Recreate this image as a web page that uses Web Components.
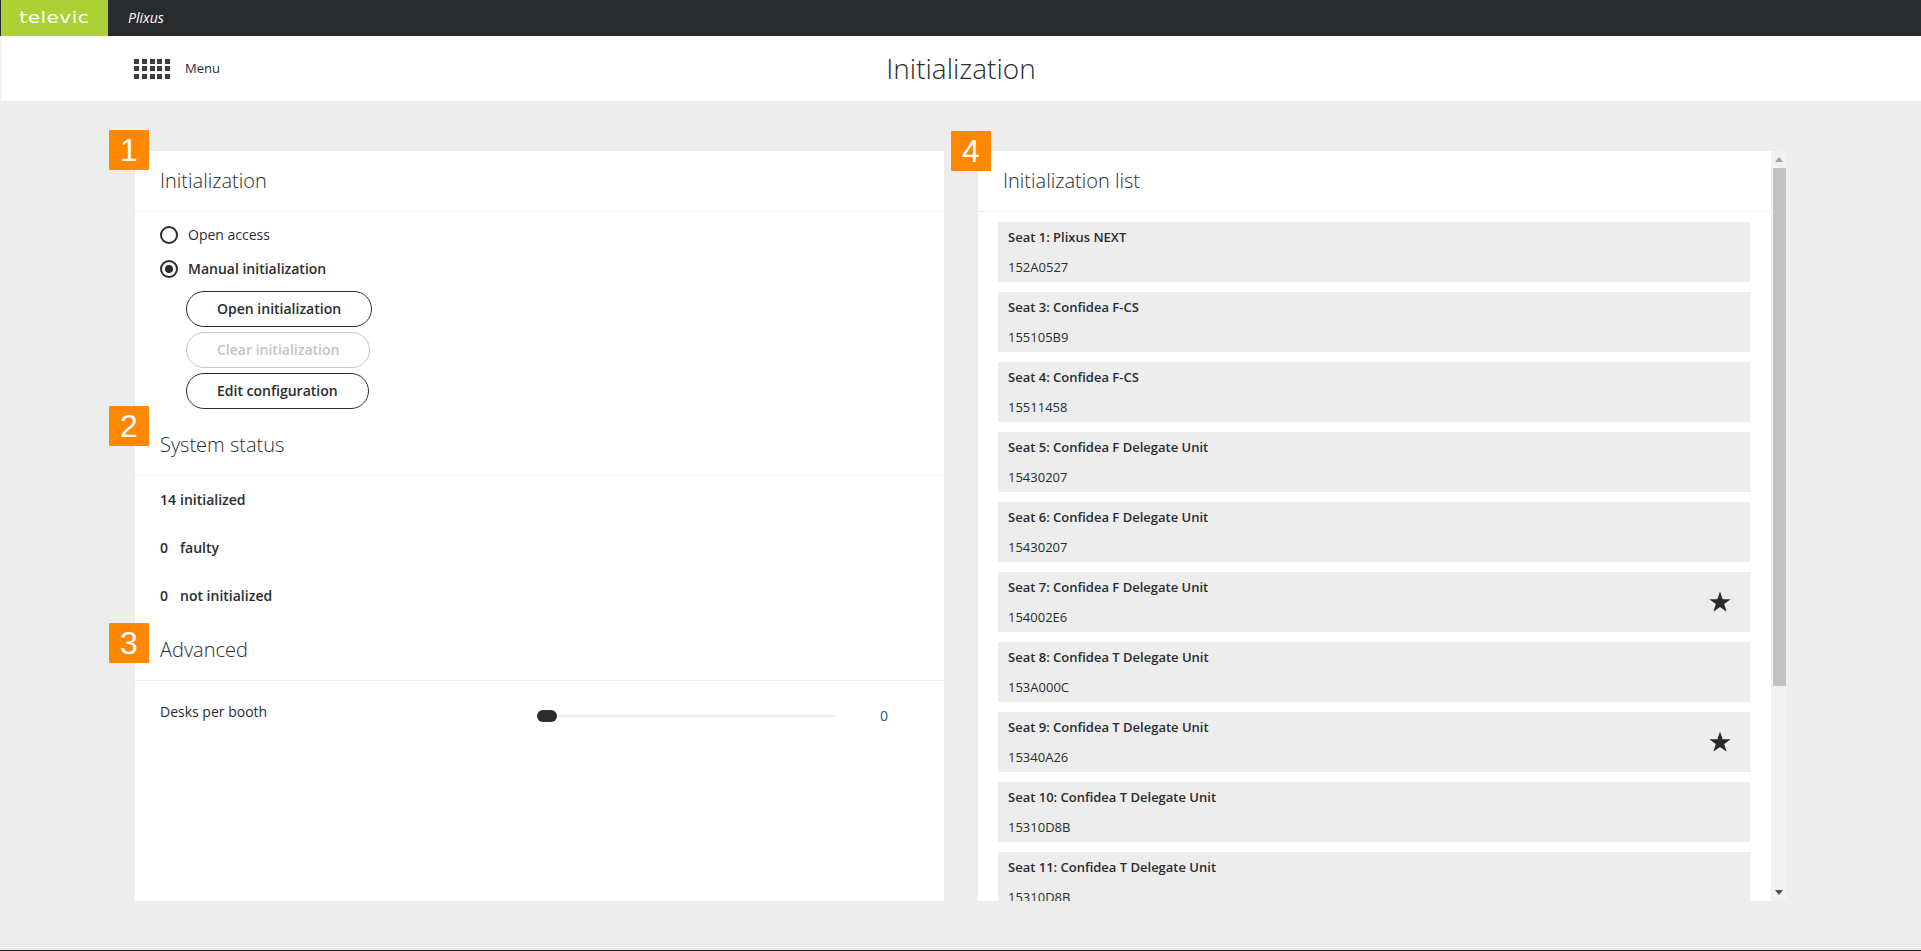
<!DOCTYPE html>
<html lang="en"><head><meta charset="utf-8"><title>Initialization</title>
<style>
html,body{margin:0;height:951px;overflow:hidden;background:#ededed;font-family:"Open Sans",sans-serif;color:#292c2f}
</style></head><body>
<app-shell>
  <top-bar slot="top"></top-bar>
  <page-header slot="head" title-text="Initialization"></page-header>
  <app-panel slot="left">
    <panel-section heading="Initialization" badge="1" badge-top="-21" style="height:264px">
      <radio-row>Open access</radio-row>
      <radio-row checked>Manual initialization</radio-row>
      <div style="display:flex;flex-direction:column;align-items:flex-start;gap:5px;margin:5px 0 0 26px">
        <pill-button>Open initialization</pill-button>
        <pill-button disabled>Clear initialization</pill-button>
        <pill-button>Edit configuration</pill-button>
      </div>
    </panel-section>
    <panel-section heading="System status" badge="2" badge-top="-9" style="height:205px" pad="12">
      <stat-row n="14" gap="tight">initialized</stat-row>
      <stat-row n="0">faulty</stat-row>
      <stat-row n="0">not initialized</stat-row>
    </panel-section>
    <panel-section heading="Advanced" badge="3" badge-top="3">
      <slider-row label="Desks per booth" value="0"></slider-row>
    </panel-section>
  </app-panel>
  <scroll-panel slot="right" heading="Initialization list" badge="4">
    <seat-card seat="Seat 1: Plixus NEXT" code="152A0527"></seat-card>
    <seat-card seat="Seat 3: Confidea F-CS" code="155105B9"></seat-card>
    <seat-card seat="Seat 4: Confidea F-CS" code="15511458"></seat-card>
    <seat-card seat="Seat 5: Confidea F Delegate Unit" code="15430207"></seat-card>
    <seat-card seat="Seat 6: Confidea F Delegate Unit" code="15430207"></seat-card>
    <seat-card seat="Seat 7: Confidea F Delegate Unit" code="154002E6" star></seat-card>
    <seat-card seat="Seat 8: Confidea T Delegate Unit" code="153A000C"></seat-card>
    <seat-card seat="Seat 9: Confidea T Delegate Unit" code="15340A26" star></seat-card>
    <seat-card seat="Seat 10: Confidea T Delegate Unit" code="15310D8B"></seat-card>
    <seat-card seat="Seat 11: Confidea T Delegate Unit" code="15310D8B"></seat-card>
  </scroll-panel>
</app-shell>
<script>
function def(name, css, html, init){
  customElements.define(name, class extends HTMLElement{
    connectedCallback(){
      if(this.shadowRoot) return;
      const r=this.attachShadow({mode:'open'});
      const a=k=>this.getAttribute(k)||'';
      r.innerHTML='<style>'+css+'</style>'+(typeof html==='function'?html(a,this):html);
      if(init) init(r,this);
    }
  });
}
const badge=(n,top)=>`<span class="badge" style="top:${top}px">${n}</span>`;
const badgeCss=`.badge{position:absolute;left:-26px;width:40px;height:40px;background:#ff8800;border-radius:1px;color:#fff;font:400 32px/40px "Liberation Sans",sans-serif;text-align:center;z-index:2}`;

def('app-shell',`:host{display:flex;flex-direction:column;height:951px;box-sizing:border-box;border-bottom:1px solid #1d1d1d}
 main{display:grid;grid-template-columns:809px 809px;column-gap:34px;padding:50px 0 0 135px;height:750px}
 `,`<slot name="top"></slot><slot name="head"></slot><main><slot name="left"></slot><slot name="right"></slot></main>`);

def('top-bar',`:host{display:flex;height:36px;background:#292c2f;padding-left:1px;box-sizing:border-box}
 .logo{width:107px;background:#acd135;color:#fff;display:flex;align-items:center;justify-content:center;font:400 15px/1 "DejaVu Sans",sans-serif;letter-spacing:.4px}
 .logo span{display:inline-block;transform:scaleX(1.33) translateY(-.5px)}
 .app{margin-left:20px;font:italic 400 14px/36px "Open Sans",sans-serif;color:#fff}`,
 `<div class="logo"><span>televic</span></div><div class="app">Plixus</div>`);

def('page-header',`:host{display:block;position:relative;height:65px;background:#fff;margin-left:1px}
 .wrap{display:flex;align-items:center;height:100%;padding-left:133px}
 .grid{display:grid;grid-template-columns:repeat(5,5px);grid-auto-rows:5px;gap:2.5px 2.75px;width:36px;}
 .grid i{background:#3a3d40;display:block}
 .menu{margin-left:15px;font:400 13px/1 "Open Sans",sans-serif;color:#292c2f}
 h1{position:absolute;left:0;right:0;top:0;margin:0;text-align:center;font:300 28px/65px "Open Sans",sans-serif;color:#292c2f;pointer-events:none}`,
 a=>`<div class="wrap"><div class="grid">${'<i></i>'.repeat(15)}</div><span class="menu">Menu</span></div><h1>${a('title-text')}</h1>`);

def('app-panel',`:host{display:flex;flex-direction:column;background:#fff;height:750px}`,`<slot></slot>`);

const headCss=`header{height:61px;box-sizing:border-box;border-bottom:1px solid #ededed;padding-left:25px;font:300 20px/60px "Open Sans",sans-serif;color:#292c2f}`;
def('panel-section',`:host{display:block;position:relative;box-sizing:border-box}${badgeCss}${headCss}
 .body{padding:6px 25px 0}
 :host([pad]) .body{padding-top:12px}`,
 a=>`${badge(a('badge'),a('badge-top'))}<header>${a('heading')}</header><div class="body"><slot></slot></div>`);

def('radio-row',`:host{display:flex;align-items:center;height:34px;font:400 14px/1 "Open Sans",sans-serif;color:#292c2f}
 :host([checked]){font-weight:600}
 .r{width:18px;height:18px;box-sizing:border-box;border:2px solid #292c2f;border-radius:50%;margin-right:10px;display:flex;align-items:center;justify-content:center}
 :host([checked]) .r::after{content:"";width:8px;height:8px;border-radius:50%;background:#292c2f}`,
 `<span class="r"></span><slot></slot>`);

def('pill-button',`:host{display:inline-flex;align-items:center;height:36px;box-sizing:border-box;padding:0 30px;border:1px solid #292c2f;border-radius:18px;background:#fff;font:600 14px/1 "Open Sans",sans-serif;color:#292c2f}
 :host([disabled]){border-color:#c4c4c4;color:#c4c4c4}`,`<slot></slot>`);

def('stat-row',`:host{display:flex;height:48px;font:600 14px/24px "Open Sans",sans-serif;color:#292c2f}
 .n{min-width:20px}`,a=>`<span class="n">${a('n')}</span><slot></slot>`);

def('slider-row',`:host{display:flex;align-items:center;height:48px;font:400 14px/1 "Open Sans",sans-serif;color:#292c2f}
 .l{width:377px;margin-top:2px}
 .track{position:relative;width:299px;height:2px;background:#ededed;margin-top:9px}
 .thumb{position:absolute;left:0;top:-5px;width:20px;height:12px;border-radius:6px;background:#292c2f}
 .v{margin-left:44px;margin-top:10px;font-weight:400;color:#0b5a9c;font-size:14px}`,
 a=>`<span class="l">${a('label')}</span><span class="track"><span class="thumb"></span></span><span class="v">${a('value')}</span>`);

def('scroll-panel',`:host{display:flex;position:relative;height:750px;background:#fff}
 ${badgeCss}
 .badge{left:-27px;top:-20px}
 .c{flex:1;min-width:0;overflow:hidden}
 ${headCss}
 header{margin-right:1px}
 .list{padding:10px 21px 0 20px;display:flex;flex-direction:column;gap:10px}
 .sb{width:16px;flex:none;background:#f1f1f1;display:flex;flex-direction:column;align-items:flex-end;position:relative}
 .b{width:16px;height:17px;display:flex;align-items:center;justify-content:center}
 .t{width:13px;margin-right:1px;height:518px;background:#c1c1c1}
 .sp{flex:1}`,
 a=>`${badge(a('badge'),-20)}<div class="c"><header>${a('heading')}</header><div class="list"><slot></slot></div></div>
 <div class="sb"><div class="b"><svg width="8" height="5" viewBox="0 0 8 5"><path d="M4 0L8 5H0Z" fill="#a3a3a3"/></svg></div><div class="t"></div><div class="sp"></div><div class="b"><svg width="8" height="5" viewBox="0 0 8 5"><path d="M0 0H8L4 5Z" fill="#505050"/></svg></div></div>`);

def('seat-card',`:host{display:flex;justify-content:space-between;flex:none;height:60px;background:#ededed;padding:0 18px 0 10px;box-sizing:border-box;color:#292c2f}
 .a{display:flex;flex-direction:column}
 .s{font:600 13px/30px "Open Sans",sans-serif}
 .k{font:400 13px/30px "Open Sans",sans-serif}
 svg{align-self:center}`,
 (a,h)=>`<div class="a"><span class="s">${a('seat')}</span><span class="k">${a('code')}</span></div>${h.hasAttribute('star')?'<svg width="24" height="24" viewBox="0 0 24 24"><path d="M12 1.5L14.6 9.2H22.7L16.2 14L18.6 21.8L12 17.1L5.4 21.8L7.8 14L1.3 9.2H9.4Z" fill="#292c2f"/></svg>':''}`);
</script>
</body></html>
